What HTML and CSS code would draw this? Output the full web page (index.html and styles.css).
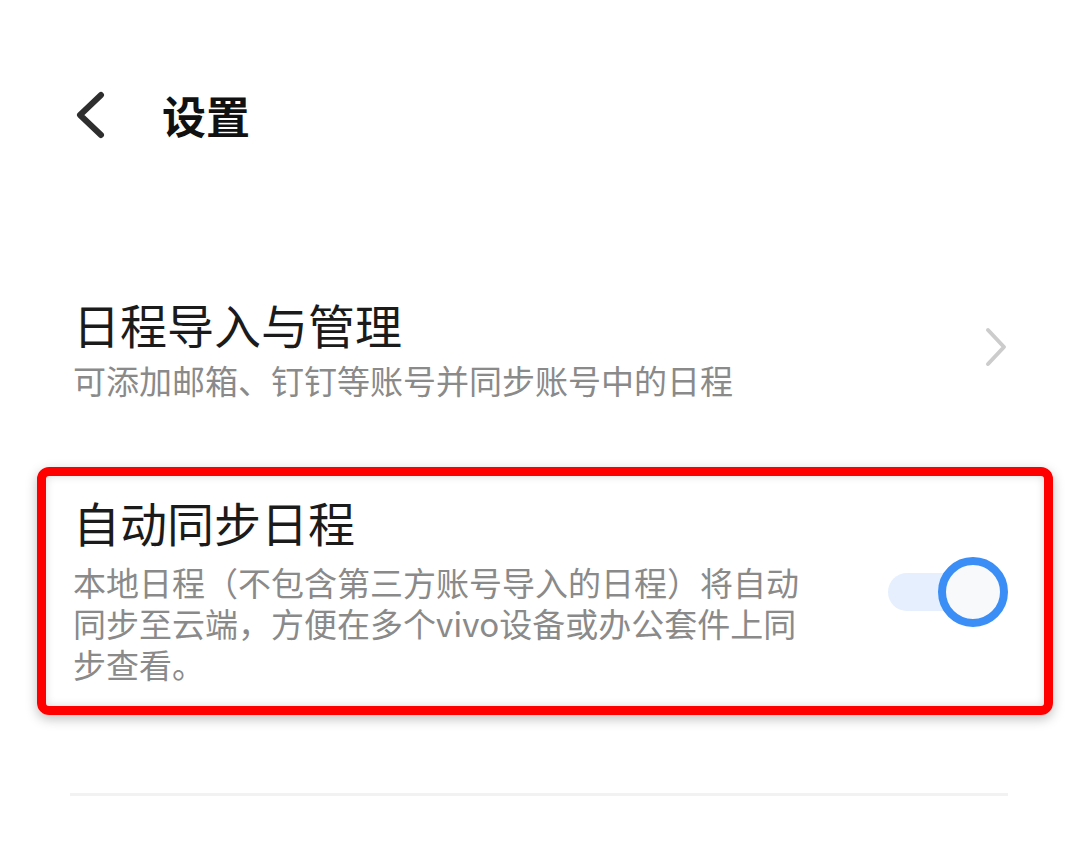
FILE: index.html
```html
<!DOCTYPE html>
<html lang="zh-CN">

<head>
    <meta charset="UTF-8">
    <meta name="viewport" content="width=device-width, initial-scale=1.0">
    <title>设置</title>
    <link rel="stylesheet" href="styles.css">
</head>

<body>
    <!-- Top bar -->
    <header class="top-bar">
        <svg class="back-icon" width="32" height="48" viewBox="0 0 32 48">
            <path d="M27 4 L6 24 L27 44" fill="none" stroke="#2e2e2e" stroke-width="6" stroke-linecap="round" stroke-linejoin="round"/>
        </svg>
        <h1 class="page-title">设置</h1>
    </header>

    <main class="settings-list">
        <!-- Import & manage -->
        <div class="setting-item">
            <div class="setting-text">
                <div class="setting-title">日程导入与管理</div>
                <div class="setting-desc">可添加邮箱、钉钉等账号并同步账号中的日程</div>
            </div>
            <svg class="arrow-icon" width="24" height="40" viewBox="0 0 24 40">
                <path d="M4 3 L20 20 L4 37" fill="none" stroke="#cccccc" stroke-width="4" stroke-linecap="round" stroke-linejoin="round"/>
            </svg>
        </div>

        <!-- Auto sync (highlighted) -->
        <div class="setting-item sync-item">
            <div class="setting-text">
                <div class="setting-title">自动同步日程</div>
                <div class="setting-desc narrow">本地日程（不包含第三方账号导入的日程）将自动同步至云端，方便在多个vivo设备或办公套件上同步查看。</div>
            </div>
            <div class="switch">
                <div class="switch-track"></div>
                <div class="switch-knob"></div>
            </div>
        </div>

        <div class="divider"></div>
    </main>
</body>

</html>
```

FILE: styles.css
```css
body {
    font-family: "Noto Sans CJK SC", "Noto Sans", sans-serif;
    background-color: #ffffff;
    margin: 0;
    padding: 0;
}

.top-bar {
    display: flex;
    align-items: center;
    height: 70px;
    margin-top: 80px;
    padding-left: 74px;
}

.back-icon {
    display: block;
}

.page-title {
    margin: 0 0 0 56px;
    font-size: 44px;
    font-weight: 700;
    color: #111;
    line-height: 1;
}

.settings-list {
    padding: 144px 72px 0 73px;
}

.setting-item {
    display: flex;
    align-items: center;
    justify-content: space-between;
}

.setting-title {
    font-size: 47px;
    line-height: 60px;
    color: #1b1b1b;
}

.setting-desc {
    margin-top: 6px;
    font-size: 33px;
    line-height: 40px;
    color: #8a8a8a;
}

.setting-desc.narrow {
    margin-top: 10px;
    max-width: 740px;
    line-height: 41px;
}

.arrow-icon {
    display: block;
}

.sync-item {
    position: relative;
    margin-top: 92px;
}

/* red highlight frame drawn over the row */
.sync-item::before {
    content: "";
    position: absolute;
    top: -25px;
    bottom: -30px;
    left: -36px;
    right: -45px;
    border: 9px solid #ff0000;
    border-radius: 12px;
    box-shadow: 0 4px 12px rgba(0, 0, 0, 0.25), inset 0 0 8px rgba(0, 0, 0, 0.15);
    pointer-events: none;
}

.switch {
    position: relative;
    width: 120px;
    height: 70px;
    margin-top: 6px;
    flex-shrink: 0;
}

.switch-track {
    position: absolute;
    left: 0;
    top: 16px;
    width: 100px;
    height: 38px;
    border-radius: 19px;
    background-color: #e5effd;
}

.switch-knob {
    position: absolute;
    right: 0;
    top: 0;
    width: 54px;
    height: 54px;
    border: 8px solid #3a8ef6;
    border-radius: 50%;
    background-color: #f8f9fb;
}

.divider {
    margin: 108px 0 0 -3px;
    height: 3px;
    background-color: #f2f2f2;
}
```
